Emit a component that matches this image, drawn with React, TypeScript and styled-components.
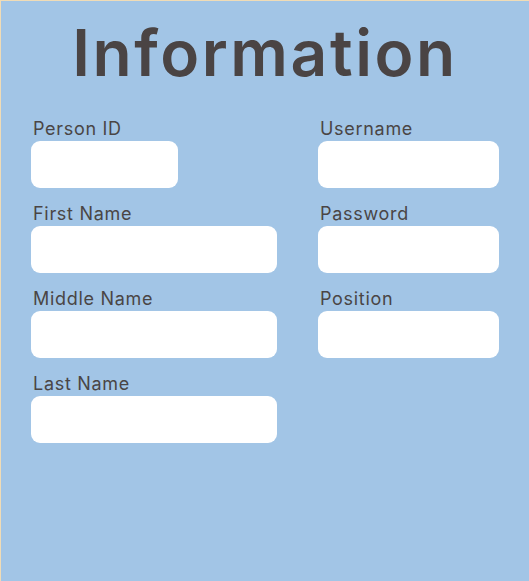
import React from 'react'
import styled, { createGlobalStyle } from 'styled-components'

const GlobalStyle = createGlobalStyle`
  html, body {
    margin: 0;
    padding: 0;
    background: #a2c5e6;
  }
  * {
    box-sizing: border-box;
  }
`

const leftFields = [
  { label: 'Person ID', width: 147 },
  { label: 'First Name' },
  { label: 'Middle Name' },
  { label: 'Last Name' },
]

const rightFields = [
  { label: 'Username' },
  { label: 'Password' },
  { label: 'Position' },
]

const Field = ({ label, width }: { label: string; width?: number }) => (
  <FieldWrap>
    <Label>{label}</Label>
    <Input $width={width} type="text" />
  </FieldWrap>
)

const App = () => {
  return (
    <Page>
      <GlobalStyle />
      <Title>Information</Title>
      <Form>
        <Column $width={246}>
          {leftFields.map((f) => (
            <Field key={f.label} label={f.label} width={f.width} />
          ))}
        </Column>
        <Column $width={181}>
          {rightFields.map((f) => (
            <Field key={f.label} label={f.label} />
          ))}
        </Column>
      </Form>
    </Page>
  )
}

export default App

const Page = styled.div`
  width: 529px;
  height: 581px;
  padding: 20px 0 0 30px;
  background-color: #a2c5e6;
  border-top: 1px solid #f0dcb6;
  border-left: 1px solid #f0dcb6;
  font-family: Inter, 'Noto Sans', sans-serif;
  color: #4a4545;
`

const Title = styled.h1`
  margin: 0 0 34px 0;
  padding-right: 30px;
  text-align: center;
  font-size: 64px;
  line-height: 63px;
  font-weight: 600;
  letter-spacing: 2.6px;
  color: #4a4444;
`

const Form = styled.form`
  display: flex;
  gap: 41px;
`

const Column = styled.div<{ $width: number }>`
  display: flex;
  flex-direction: column;
  gap: 15px;
  width: ${(p) => p.$width}px;
`

const FieldWrap = styled.div`
  display: flex;
  flex-direction: column;
  gap: 1px;
`

const Label = styled.label`
  padding-left: 2px;
  font-size: 18px;
  line-height: 22px;
  font-weight: 400;
  letter-spacing: 0.7px;
`

const Input = styled.input<{ $width?: number }>`
  width: ${(p) => (p.$width ? `${p.$width}px` : '100%')};
  height: 47px;
  border: none;
  border-radius: 9px;
  background: #ffffff;
  outline: none;
  padding: 0 12px;
  font-family: inherit;
  font-size: 16px;
`
